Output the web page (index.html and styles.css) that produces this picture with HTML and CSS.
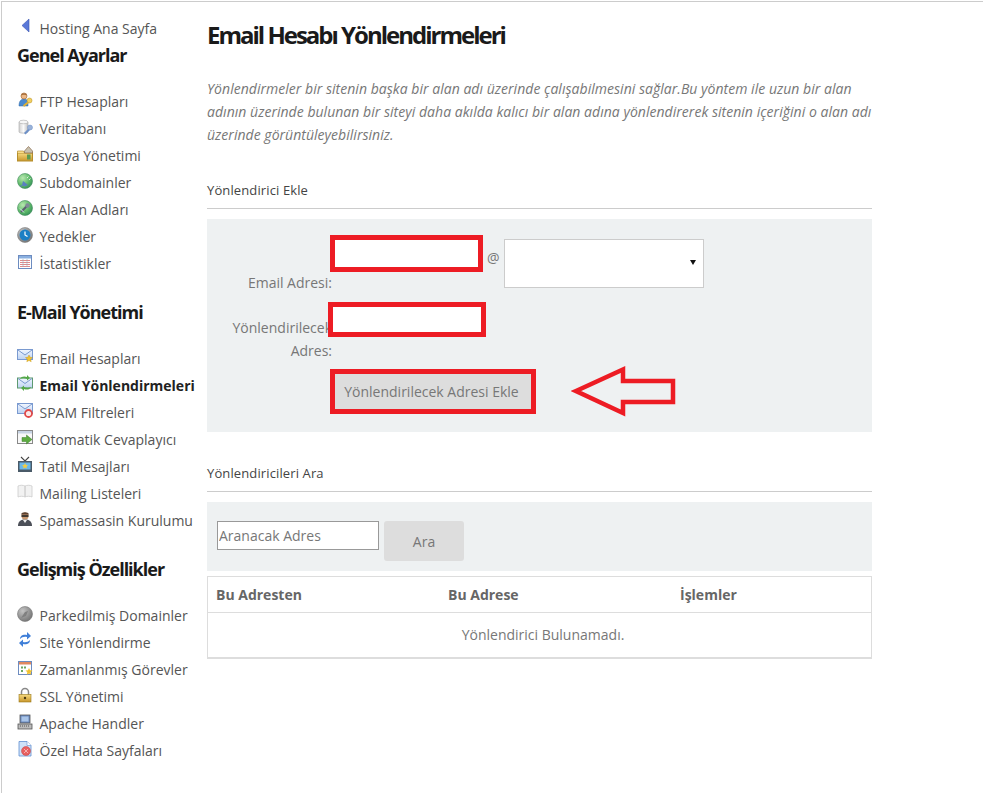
FILE: index.html
```html
<!DOCTYPE html>
<html lang="tr">
<head>
    <meta charset="UTF-8">
    <meta name="viewport" content="width=device-width, initial-scale=1.0">
    <title>Email Hesabı Yönlendirmeleri</title>
    <link rel="stylesheet" href="styles.css">
</head>
<body>
<svg class="defs" aria-hidden="true">
    <defs>
        <radialGradient id="globe" cx=".35" cy=".3" r=".8"><stop offset="0" stop-color="#b8e8b0"/><stop offset=".6" stop-color="#5cb868"/><stop offset="1" stop-color="#2f8a58"/></radialGradient>
        <radialGradient id="ball" cx=".35" cy=".3" r=".8"><stop offset="0" stop-color="#c4c4c4"/><stop offset="1" stop-color="#6e6e6e"/></radialGradient>
        <linearGradient id="mail" x1="0" y1="0" x2="0" y2="1"><stop offset="0" stop-color="#f2f7ff"/><stop offset="1" stop-color="#bcd2f2"/></linearGradient>
        <linearGradient id="gold" x1="0" y1="0" x2="0" y2="1"><stop offset="0" stop-color="#f6da80"/><stop offset="1" stop-color="#c8962c"/></linearGradient>
        <linearGradient id="silver" x1="0" y1="0" x2="1" y2="0"><stop offset="0" stop-color="#d0d0d0"/><stop offset=".5" stop-color="#fafafa"/><stop offset="1" stop-color="#c0c0c0"/></linearGradient>
    </defs>
</svg>
<div class="page">
    <aside class="sidebar">
        <a class="side-item back" href="#">
            <svg class="icon" viewBox="0 0 16 16"><path d="M12 0v13L5 6.500z" fill="#5a78d8" stroke="#3b55b0" stroke-width=".6"/></svg>
            Hosting Ana Sayfa
        </a>
        <h2 class="side-title first">Genel Ayarlar</h2>
        <a class="side-item" href="#">
            <svg class="icon" viewBox="0 0 16 16"><path d="M2 14c0-5 2-7 5-7s4 2 4 4v3z" fill="#4a8ad0" stroke="#2f6aa8" stroke-width=".5"/><circle cx="7" cy="4" r="3" fill="#edb988" stroke="#a8703c" stroke-width=".7"/><path d="M4 3.500C5 .5 9 .5 10 3.500 8 2.500 6 2.500 4 3.500z" fill="#a8703c"/><circle cx="12.500" cy="8.500" r="2.500" fill="#f4d060" stroke="#b08a20" stroke-width=".5"/><path d="M11 10.500l-4.500 3.500" stroke="#e0b030" stroke-width="2"/></svg>
            FTP Hesapları
        </a>
        <a class="side-item" href="#">
            <svg class="icon" viewBox="0 0 16 16"><path d="M2 3v10c0 1.500 9 1.500 9 0V3z" fill="url(#silver)" stroke="#aaa" stroke-width=".6"/><ellipse cx="6.500" cy="3" rx="4.500" ry="1.800" fill="#f6f6f6" stroke="#aaa" stroke-width=".6"/><path d="M7 14l5-5 1.500 1.500-5 5z" fill="#6d90c8"/><circle cx="13" cy="8.500" r="2.500" fill="#9ab2d8" stroke="#6d90c8" stroke-width=".5"/></svg>
            Veritabanı
        </a>
        <a class="side-item" href="#">
            <svg class="icon" viewBox="0 0 16 16"><rect x=".5" y="7" width="15" height="8" fill="url(#gold)" stroke="#b58e2c"/><path d="M.5 7V5h6l1 2" fill="#f7dc8c" stroke="#b58e2c" stroke-width=".7"/><path d="M7.500 5L11.500.5 15.500 5v2h-8z" fill="#c9c2b0" stroke="#8a6a4a" stroke-width=".7"/><rect x="10" y="8.500" width="3.500" height="5" fill="#5a9a50"/></svg>
            Dosya Yönetimi
        </a>
        <a class="side-item" href="#">
            <svg class="icon" viewBox="0 0 16 16"><circle cx="8" cy="8" r="7.500" fill="url(#globe)" stroke="#3f8a5a" stroke-width=".6"/><path d="M3 13l2-1 1-4 5 4-3.500 1.500-2-1-2 1.500z" fill="#5a7fc0"/><path d="M10 5l1.500-1.500M12 7l1.500-1.500" stroke="#dcefdc"/></svg>
            Subdomainler
        </a>
        <a class="side-item" href="#">
            <svg class="icon" viewBox="0 0 16 16"><circle cx="8" cy="8" r="7.500" fill="url(#globe)" stroke="#3f8a5a" stroke-width=".6"/><path d="M4 12l6-6" stroke="#5a6070" stroke-width="2.200"/><circle cx="10.500" cy="5.500" r="2.200" fill="#808898"/><path d="M3 8.500l4 4" stroke="#d8ecf4"/></svg>
            Ek Alan Adları
        </a>
        <a class="side-item" href="#">
            <svg class="icon" viewBox="0 0 16 16"><circle cx="8" cy="8" r="7.500" fill="url(#ball)" stroke="#808080" stroke-width=".6"/><circle cx="8" cy="8" r="5.500" fill="#1b7fc4"/><path d="M8 4.500V8l2.500 1.500" fill="none" stroke="#fff" stroke-width="1.200"/></svg>
            Yedekler
        </a>
        <a class="side-item" href="#">
            <svg class="icon" viewBox="0 0 16 16"><rect x="1.500" y="1.500" width="13" height="13" fill="#fff" stroke="#6d8cc0"/><rect x="2" y="2" width="12" height="2.500" fill="#8ab0e0"/><path d="M3 6.500h10M3 8.500h10M3 10.500h10M3 12.500h10" stroke="#e08a8a"/><path d="M6 5v8M10 5v8" stroke="#9ab" stroke-width=".6"/></svg>
            İstatistikler
        </a>

        <h2 class="side-title">E-Mail Yönetimi</h2>
        <a class="side-item" href="#">
            <svg class="icon" viewBox="0 0 16 16"><rect x=".5" y=".5" width="15" height="10" fill="url(#mail)" stroke="#7a9ad0"/><path d="M1 1l7 5 7-5" fill="none" stroke="#7a9ad0"/><path d="M12 6l1.100 2.300 2.400.3-1.800 1.700.5 2.400L12 11.500l-2.200 1.200.5-2.400-1.800-1.700 2.400-.3z" fill="#f2c230" stroke="#c09010" stroke-width=".4"/></svg>
            Email Hesapları
        </a>
        <a class="side-item active" href="#">
            <svg class="icon" viewBox="0 0 16 16"><rect x=".5" y="2" width="15" height="10" fill="url(#mail)" stroke="#5d9a70"/><path d="M1 2.500l7 5 7-5" fill="none" stroke="#7a9ad0"/><path d="M3 3c1-3 5-3 7-2V-1l3 3-3 2.500V3C8 2 5 2 3 3z" fill="#54a848"/><path d="M14 11c-1 3-5 3-7 2v2l-3-3 3-2.500V11c2 1 5 1 7 0z" fill="#54a848"/></svg>
            Email Yönlendirmeleri
        </a>
        <a class="side-item" href="#">
            <svg class="icon" viewBox="0 0 16 16"><rect x=".5" y=".5" width="15" height="10" fill="url(#mail)" stroke="#7a9ad0"/><path d="M1 1l7 5 7-5" fill="none" stroke="#7a9ad0"/><circle cx="11.500" cy="10.500" r="3.500" fill="#fbe8e8" stroke="#e04848" stroke-width="1.800"/></svg>
            SPAM Filtreleri
        </a>
        <a class="side-item" href="#">
            <svg class="icon" viewBox="0 0 16 16"><rect x=".5" y=".5" width="15" height="13" fill="#f8f8f8" stroke="#888"/><rect x="1" y="1" width="14" height="2.500" fill="#c8d4e4"/><path d="M5 7.500h4.500V5L15 9.500 9.500 14v-2.500H5z" fill="#5cab40" stroke="#3d7f2a" stroke-width=".5"/></svg>
            Otomatik Cevaplayıcı
        </a>
        <a class="side-item" href="#">
            <svg class="icon" viewBox="0 0 16 16"><path d="M4 0l4 4 4-4" fill="none" stroke="#444" stroke-width="1.100"/><rect x="1" y="4" width="14" height="11" fill="#4a5a68"/><rect x="2.500" y="5.500" width="11" height="7" fill="#6cb8e8"/><path d="M8 6l.9 1.900 2.100.2-1.500 1.500.4 2L8 10.600l-1.900 1 .4-2L5 8.100l2.100-.2z" fill="#f4cc40"/></svg>
            Tatil Mesajları
        </a>
        <a class="side-item" href="#">
            <svg class="icon" viewBox="0 0 16 16"><path d="M1 2c2-1 5-1 7 0v11c-2-1-5-1-7 0zM8 2c2-1 5-1 7 0v11c-2-1-5-1-7 0z" fill="#f2f2f2" stroke="#ccc" stroke-width=".8"/></svg>
            Mailing Listeleri
        </a>
        <a class="side-item" href="#">
            <svg class="icon" viewBox="0 0 16 16"><path d="M1 15c0-5 3-6.500 7-6.500S15 10 15 15z" fill="#4c5058"/><circle cx="8" cy="5" r="3.500" fill="#c89870"/><path d="M4 3.500C4.500.5 11.500.5 12 3.500z" fill="#5a4030"/><rect x="4.500" y="4.200" width="7" height="1.600" fill="#222"/><path d="M6 9l2 3 2-3z" fill="#eee"/></svg>
            Spamassasin Kurulumu
        </a>

        <h2 class="side-title">Gelişmiş Özellikler</h2>
        <a class="side-item" href="#">
            <svg class="icon" viewBox="0 0 16 16"><circle cx="8" cy="8" r="7.500" fill="url(#ball)" stroke="#777" stroke-width=".6"/><path d="M4 12l4-6 3-1-2 5z" fill="#808080"/></svg>
            Parkedilmiş Domainler
        </a>
        <a class="side-item" href="#">
            <svg class="icon" viewBox="0 0 16 16"><path d="M3 6c0-4 4-5 7-4V-1l4 4-4 3.500V4C7 3.500 5 4 3 6z" fill="#3f7fd8"/><path d="M13 7c0 4-4 5-7 4v3l-4-4 4-3.500V9c3 .5 5 0 7-2z" fill="#3f7fd8"/></svg>
            Site Yönlendirme
        </a>
        <a class="side-item" href="#">
            <svg class="icon" viewBox="0 0 16 16"><rect x="1.500" y="1.500" width="13" height="13" fill="#fff" stroke="#6d8cc0"/><rect x="2" y="2" width="12" height="2.500" fill="#e08a60"/><path d="M4 6.500h2v2H4zM7 6.500h2v2H7zM4 10h2v2H4z" fill="#6ca860"/><path d="M12 8l1.100 2.300 2.400.3-1.800 1.700.5 2.400-2.200-1.200-2.200 1.200.5-2.400-1.800-1.700 2.400-.3z" fill="#f2c230"/></svg>
            Zamanlanmış Görevler
        </a>
        <a class="side-item" href="#">
            <svg class="icon" viewBox="0 0 16 16"><path d="M4.500 8V5a3.500 3.500 0 017 0v3" fill="none" stroke="#888" stroke-width="1.500"/><rect x="2" y="7.500" width="12" height="7.500" fill="url(#gold)" stroke="#9a7818" stroke-width=".6"/><circle cx="8" cy="11" r="1.200" fill="#4a3a10"/></svg>
            SSL Yönetimi
        </a>
        <a class="side-item" href="#">
            <svg class="icon" viewBox="0 0 16 16"><rect x="3" y="1" width="10" height="8" fill="#6a8ac0" stroke="#555" stroke-width=".8"/><rect x="4.500" y="2.500" width="7" height="5" fill="#a8c4e8"/><rect x="1" y="10" width="14" height="5" fill="#bbb" stroke="#555" stroke-width=".8"/><path d="M3 12h10" stroke="#555" stroke-dasharray="1 1"/></svg>
            Apache Handler
        </a>
        <a class="side-item" href="#">
            <svg class="icon" viewBox="0 0 16 16"><path d="M2 .5h8l4 4V15H2z" fill="#cfe2f8" stroke="#5f8fd0" stroke-width=".8"/><path d="M10 .5v4h4" fill="#fff" stroke="#5f8fd0" stroke-width=".6"/><circle cx="9" cy="10" r="4.500" fill="#e86060" stroke="#c04040" stroke-width=".5"/><path d="M7 8l4 4M11 8l-4 4" stroke="#f5b0b0"/></svg>
            Özel Hata Sayfaları
        </a>

        <h2 class="side-title last">Ek Hizmetler</h2>
    </aside>

    <main class="content">
        <h1 class="page-title">Email Hesabı Yönlendirmeleri</h1>
        <p class="intro">Yönlendirmeler bir sitenin başka bir alan adı üzerinde çalışabilmesini sağlar.Bu yöntem ile uzun bir alan adının üzerinde bulunan bir siteyi daha akılda kalıcı bir alan adına yönlendirerek sitenin içeriğini o alan adı üzerinde görüntüleyebilirsiniz.</p>

        <h3 class="section-title">Yönlendirici Ekle</h3>
        <form class="panel add-form">
            <label class="form-label">Email Adresi:</label>
            <div class="email-fields">
                <input class="marked-input" type="text">
                <span class="at">@</span>
                <div class="domain-select"><span class="caret"></span></div>
            </div>
            <label class="form-label">Yönlendirilecek Adres:</label>
            <div><input class="marked-input target" type="text"></div>
            <div class="submit-row">
                <button class="marked-button" type="button">Yönlendirilecek Adresi Ekle</button>
            </div>
            <svg class="arrow" viewBox="0 0 110 52"><path d="M5 25L52 3.500V15H102V36H52V47z" fill="none" stroke="#ed1c24" stroke-width="4.500"/></svg>
        </form>

        <h3 class="section-title second">Yönlendiricileri Ara</h3>
        <form class="panel search-form">
            <input class="search-input" type="text" placeholder="Aranacak Adres">
            <button class="search-button" type="button">Ara</button>
        </form>

        <table class="result-table">
            <thead>
                <tr><th>Bu Adresten</th><th>Bu Adrese</th><th>İşlemler</th></tr>
            </thead>
            <tbody>
                <tr><td colspan="3">Yönlendirici Bulunamadı.</td></tr>
            </tbody>
        </table>
    </main>
</div>
</body>
</html>
```

FILE: styles.css
```css
html, body {
    margin: 0;
    padding: 0;
    height: 793px;
    overflow: hidden;
    background-color: #fff;
}

body {
    font-family: "Open Sans", "DejaVu Sans", sans-serif;
    font-size: 14px;
    color: #666;
}

.defs {
    display: block;
    width: 0;
    height: 0;
}

.page {
    display: flex;
    height: 791px;
    margin: 1px 0 0 1px;
    border-top: 1px solid #ccc;
    border-left: 1px solid #ccc;
    overflow: hidden;
}

/* left menu */
.sidebar {
    flex: 0 0 190px;
    width: 190px;
    padding: 13px 0 0 15px;
}

.side-title {
    margin: 22px 0 19px;
    font-size: 18px;
    line-height: 27px;
    font-weight: 700;
    letter-spacing: -1px;
    color: #1a1a1a;
}

.side-title.first {
    margin-top: 0;
}

.side-title.last {
    margin-top: 24px;
}

.side-item {
    display: flex;
    align-items: center;
    height: 27px;
    color: #555;
    text-decoration: none;
    white-space: nowrap;
}

.side-item.active {
    font-weight: 700;
    color: #222;
}

.icon {
    flex: none;
    width: 16px;
    height: 16px;
    margin: -4px 6.5px 0 0;
    overflow: visible;
}

/* main column */
.content {
    flex: 0 0 665px;
    width: 665px;
}

.page-title {
    margin: 18px 0 0;
    font-size: 24px;
    line-height: 30px;
    font-weight: 700;
    letter-spacing: -2px;
    color: #1a1a1a;
}

.intro {
    margin: 27px 0 0;
    font-size: 14px;
    line-height: 23px;
    font-style: italic;
    letter-spacing: 0.03px;
    color: #777;
}

.section-title {
    margin: 35px 0 10px;
    padding-bottom: 9px;
    border-bottom: 1px solid #ccc;
    font-size: 13px;
    line-height: 18px;
    font-weight: 400;
    letter-spacing: 0.12px;
    color: #444;
}

.section-title.second {
    margin-top: 32px;
}

.panel {
    background-color: #eef1f2;
}

.add-form {
    position: relative;
    display: grid;
    grid-template-columns: 125px 1fr;
    grid-template-rows: 59px 68px auto;
    height: 213px;
    box-sizing: border-box;
    padding-top: 16px;
    align-content: start;
}

.form-label {
    align-self: end;
    text-align: right;
    line-height: 23px;
    color: #777;
}

.email-fields {
    display: flex;
    align-items: flex-start;
}

.marked-input {
    display: block;
    width: 153px;
    height: 37px;
    box-sizing: border-box;
    margin: 0 0 0 -2px;
    border: 5px solid #ed1c24;
    background-color: #fff;
    outline: none;
}

.marked-input.target {
    width: 158px;
    height: 35px;
    margin: 8px 0 0 -4px;
}

.at {
    margin: 13px 4px 0;
    font-size: 14px;
    line-height: 20px;
    color: #777;
}

.domain-select {
    position: relative;
    width: 200px;
    height: 49px;
    box-sizing: border-box;
    margin-top: 4px;
    border: 1px solid #ccc;
    background-color: #fff;
}

.caret {
    position: absolute;
    top: 20px;
    right: 7px;
    border-style: solid;
    border-width: 5px 3px 0;
    border-color: #111 transparent transparent;
}

.submit-row {
    grid-column: 2;
    margin-top: 7px;
}

.marked-button {
    display: block;
    width: 206px;
    height: 45px;
    box-sizing: border-box;
    margin-left: -2px;
    padding: 0 3px 0 0;
    border: 5px solid #ed1c24;
    background-color: #ddd;
    font-family: inherit;
    font-size: 14px;
    color: #777;
}

/* hand drawn arrow lying over the panel */
.arrow {
    position: absolute;
    left: 364px;
    top: 147px;
    width: 110px;
    height: 52px;
}

.search-form {
    display: flex;
    align-items: flex-start;
    height: 69px;
    box-sizing: border-box;
    padding: 19px 0 0 10px;
}

.search-input {
    width: 162px;
    height: 29px;
    box-sizing: border-box;
    padding: 0 1px;
    border: 1px solid #999;
    background-color: #fff;
    font-family: inherit;
    font-size: 14px;
    color: #777;
}

.search-input::placeholder {
    color: #777;
    opacity: 1;
}

.search-button {
    width: 80px;
    height: 40px;
    margin-left: 5px;
    padding: 0;
    border: none;
    border-radius: 3px;
    background-color: #ddd;
    font-family: inherit;
    font-size: 14px;
    color: #777;
}

.result-table {
    width: 665px;
    margin-top: 5px;
    border-collapse: collapse;
    table-layout: fixed;
    border: 1px solid #ddd;
    border-bottom-width: 2px;
}

.result-table th {
    width: 216px;
    height: 35px;
    padding: 0 8px;
    border-bottom: 1px solid #ddd;
    text-align: left;
    font-size: 14px;
    font-weight: 700;
    color: #666;
}

.result-table th:last-child {
    width: auto;
}

.result-table td {
    height: 42px;
    padding: 0 0 2px 7px;
    text-align: center;
    color: #777;
}
```
